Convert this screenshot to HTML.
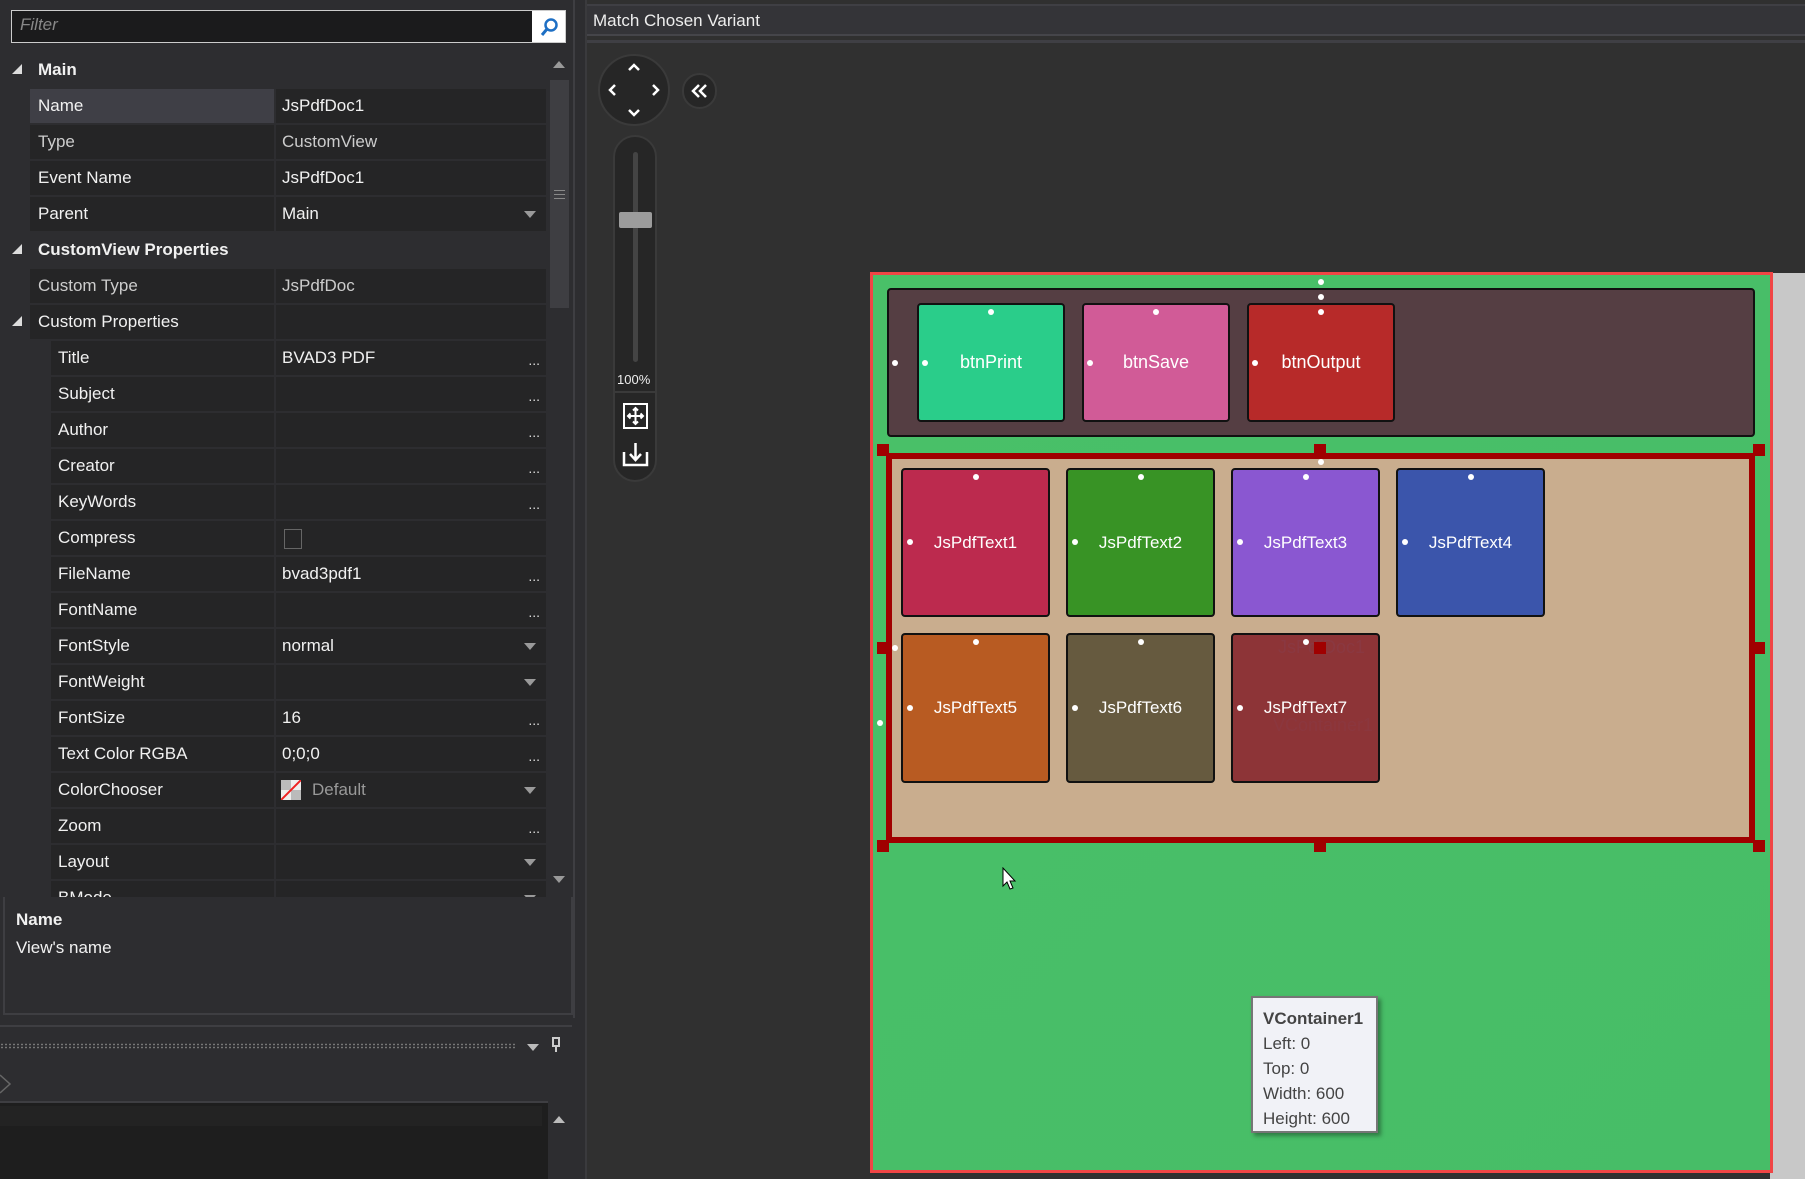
<!DOCTYPE html>
<html style="width:1805px;height:1179px;overflow:hidden"><head><meta charset="utf-8"><style>
*{margin:0;padding:0;box-sizing:border-box}
body{width:1805px;height:1179px;background:#2d2d30;font-family:"Liberation Sans",sans-serif;position:relative;overflow:hidden;color:#f1f1f1}
.a{position:absolute}
.lbl{position:absolute;background:#252526;height:34px;font-size:17px;line-height:34px;color:#f1f1f1;white-space:nowrap;overflow:hidden}
.val{position:absolute;left:276px;width:270px;background:#252526;height:34px;font-size:17px;line-height:34px;padding-left:6px;color:#f1f1f1;white-space:nowrap}
.dots{position:absolute;right:6px;top:2px;font-size:14px;color:#ddd}
.arr{position:absolute;right:10px;top:14px;width:0;height:0;border-left:6px solid transparent;border-right:6px solid transparent;border-top:7px solid #9a9a9a}
.hdr{position:absolute;left:38px;font-size:17px;font-weight:bold;line-height:34px;height:34px}
.tri{position:absolute;left:12px;width:0;height:0;border-left:10px solid transparent;border-bottom:10px solid #ddd}
.tile{position:absolute;border:2px solid #111;border-radius:4px;color:#fff;font-size:18px;text-align:center}
.dot{position:absolute;width:6px;height:6px;border-radius:3px;background:#fff}
.h{position:absolute;width:12px;height:12px;background:#a00000}
</style></head><body>
<!-- left panel -->
<div class="a" style="left:0;top:0;width:575px;height:1018px;background:#2d2d30;border-right:2px solid #3e3e42"></div>
<div class="a" style="left:11px;top:10px;width:555px;height:33px;border:1px solid #ccc;background:#1b1b1c"></div>
<div class="a" style="left:20px;top:15px;font-size:17px;font-style:italic;color:#888">Filter</div>
<div class="a" style="left:532px;top:11px;width:33px;height:31px;background:#fff"></div>
<svg class="a" style="left:538px;top:16px" width="22" height="22"><circle cx="13" cy="9" r="5.5" fill="none" stroke="#1e6fc4" stroke-width="2.5"/><line x1="9" y1="13" x2="4" y2="19" stroke="#1e6fc4" stroke-width="3"/></svg>
<div class="a" style="left:549px;top:53px;width:21px;height:844px;background:#2d2d30"></div>
<div class="a" style="left:550px;top:80px;width:19px;height:228px;background:#3e3e42"></div>
<div class="a" style="left:553px;top:61px;width:0;height:0;border-left:6px solid transparent;border-right:6px solid transparent;border-bottom:7px solid #999"></div>
<div class="a" style="left:553px;top:876px;width:0;height:0;border-left:6px solid transparent;border-right:6px solid transparent;border-top:7px solid #999"></div>
<div class="a" style="left:554px;top:190px;width:11px;height:9px;border-top:1px solid #888;border-bottom:1px solid #888"></div>
<div class="a" style="left:554px;top:194px;width:11px;height:1px;background:#888"></div>

<div class="a" style="left:0;top:53px;width:547px;height:844px;overflow:hidden">
<div class="tri" style="top:11px"></div><div class="hdr" style="top:0">Main</div>
<div class="lbl" style="left:30px;width:244px;top:36px;padding-left:8px;background:#3f3f46">Name</div><div class="val" style="top:36px">JsPdfDoc1</div>
<div class="lbl" style="left:30px;width:244px;top:72px;padding-left:8px;color:#ccc">Type</div><div class="val" style="top:72px;color:#ccc">CustomView</div>
<div class="lbl" style="left:30px;width:244px;top:108px;padding-left:8px">Event Name</div><div class="val" style="top:108px">JsPdfDoc1</div>
<div class="lbl" style="left:30px;width:244px;top:144px;padding-left:8px">Parent</div><div class="val" style="top:144px">Main<div class="arr"></div></div>
<div class="tri" style="top:191px"></div><div class="hdr" style="top:180px">CustomView Properties</div>
<div class="lbl" style="left:30px;width:244px;top:216px;padding-left:8px;color:#ccc">Custom Type</div><div class="val" style="top:216px;color:#ccc">JsPdfDoc</div>
<div class="tri" style="top:263px"></div><div class="lbl" style="left:30px;width:244px;top:252px;padding-left:8px">Custom Properties</div><div class="val" style="top:252px"></div>
<div class="lbl" style="left:51px;width:223px;top:288px;padding-left:7px">Title</div><div class="val" style="top:288px">BVAD3 PDF<span class="dots">...</span></div>
<div class="lbl" style="left:51px;width:223px;top:324px;padding-left:7px">Subject</div><div class="val" style="top:324px"><span class="dots">...</span></div>
<div class="lbl" style="left:51px;width:223px;top:360px;padding-left:7px">Author</div><div class="val" style="top:360px"><span class="dots">...</span></div>
<div class="lbl" style="left:51px;width:223px;top:396px;padding-left:7px">Creator</div><div class="val" style="top:396px"><span class="dots">...</span></div>
<div class="lbl" style="left:51px;width:223px;top:432px;padding-left:7px">KeyWords</div><div class="val" style="top:432px"><span class="dots">...</span></div>
<div class="lbl" style="left:51px;width:223px;top:468px;padding-left:7px">Compress</div><div class="val" style="top:468px"><div class="a" style="left:8px;top:8px;width:18px;height:20px;border:1px solid #666"></div></div>
<div class="lbl" style="left:51px;width:223px;top:504px;padding-left:7px">FileName</div><div class="val" style="top:504px">bvad3pdf1<span class="dots">...</span></div>
<div class="lbl" style="left:51px;width:223px;top:540px;padding-left:7px">FontName</div><div class="val" style="top:540px"><span class="dots">...</span></div>
<div class="lbl" style="left:51px;width:223px;top:576px;padding-left:7px">FontStyle</div><div class="val" style="top:576px">normal<div class="arr"></div></div>
<div class="lbl" style="left:51px;width:223px;top:612px;padding-left:7px">FontWeight</div><div class="val" style="top:612px"><div class="arr"></div></div>
<div class="lbl" style="left:51px;width:223px;top:648px;padding-left:7px">FontSize</div><div class="val" style="top:648px">16<span class="dots">...</span></div>
<div class="lbl" style="left:51px;width:223px;top:684px;padding-left:7px">Text Color RGBA</div><div class="val" style="top:684px">0;0;0<span class="dots">...</span></div>
<div class="lbl" style="left:51px;width:223px;top:720px;padding-left:7px">ColorChooser</div><div class="val" style="top:720px;padding-left:36px;color:#999">Default<svg class="a" style="left:5px;top:7px" width="20" height="20"><rect width="20" height="20" fill="#eee"/><rect width="10" height="10" fill="#bbb"/><rect x="10" y="10" width="10" height="10" fill="#bbb"/><line x1="0" y1="20" x2="20" y2="0" stroke="#e22" stroke-width="2"/></svg><div class="arr"></div></div>
<div class="lbl" style="left:51px;width:223px;top:756px;padding-left:7px">Zoom</div><div class="val" style="top:756px"><span class="dots">...</span></div>
<div class="lbl" style="left:51px;width:223px;top:792px;padding-left:7px">Layout</div><div class="val" style="top:792px"><div class="arr"></div></div>
<div class="lbl" style="left:51px;width:223px;top:828px;padding-left:7px">BMode</div><div class="val" style="top:828px"><div class="arr"></div></div>
</div>
<div class="a" style="left:3px;top:897px;width:570px;height:118px;background:#2d2d30;border:2px solid #3e3e42;border-top:none"></div>
<div class="a" style="left:16px;top:910px;font-size:17px;font-weight:bold">Name</div>
<div class="a" style="left:16px;top:938px;font-size:17px">View's name</div>
<!-- bottom left -->
<div class="a" style="left:0;top:1025px;width:572px;height:154px;background:#2d2d30;border-top:2px solid #3e3e42"></div>
<div class="a" style="left:0;top:1043px;width:515px;height:6px;background-image:radial-gradient(#777 1px,transparent 1.2px);background-size:4px 3px"></div>
<div class="a" style="left:527px;top:1044px;width:0;height:0;border-left:6px solid transparent;border-right:6px solid transparent;border-top:7px solid #bbb"></div>
<div class="a" style="left:552px;top:1037px;width:8px;height:10px;border:2px solid #ccc"></div><div class="a" style="left:555px;top:1047px;width:2px;height:5px;background:#ccc"></div>
<svg class="a" style="left:0;top:1074px" width="14" height="20"><path d="M0 1 L10 10 L0 19" fill="none" stroke="#666" stroke-width="1.5"/></svg>
<div class="a" style="left:0;top:1101px;width:552px;height:78px;background:#1e1e1e;border-top:2px solid #3e3e42"></div>
<div class="a" style="left:0;top:1106px;width:542px;height:20px;background:#232323"></div>
<div class="a" style="left:548px;top:1101px;width:22px;height:78px;background:#2d2d30"></div>
<div class="a" style="left:553px;top:1116px;width:0;height:0;border-left:6px solid transparent;border-right:6px solid transparent;border-bottom:7px solid #bbb"></div>

<!-- right area -->
<div class="a" style="left:585px;top:0;width:1220px;height:1179px;background:#303030;border-left:2px solid #3a3a3d"></div>
<div class="a" style="left:587px;top:4px;width:1218px;height:32px;background:#343438;border-top:2px solid #3f3f44;border-bottom:2px solid #45454a"></div>
<div class="a" style="left:587px;top:40px;width:1218px;height:3px;background:#3f3f44"></div>
<div class="a" style="left:593px;top:11px;font-size:17px;color:#eee">Match Chosen Variant</div>
<!-- nav -->
<div class="a" style="left:598px;top:54px;width:72px;height:72px;border-radius:36px;background:#262626;border:2px solid #3a3a3a"></div>
<svg class="a" style="left:598px;top:54px" width="72" height="72" fill="none" stroke="#fff" stroke-width="2.5"><path d="M31 16 L36 11 L41 16"/><path d="M31 56 L36 61 L41 56"/><path d="M17 31 L12 36 L17 41"/><path d="M55 31 L60 36 L55 41"/></svg>
<div class="a" style="left:682px;top:73px;width:35px;height:36px;border-radius:18px;background:#262626;border:2px solid #3a3a3a"></div>
<svg class="a" style="left:682px;top:73px" width="35" height="36" fill="none" stroke="#fff" stroke-width="2.5"><path d="M17 12 L11 18 L17 24"/><path d="M24 12 L18 18 L24 24"/></svg>
<div class="a" style="left:613px;top:135px;width:44px;height:347px;border-radius:22px;background:#262626;border:2px solid #3a3a3a"></div>
<div class="a" style="left:633px;top:152px;width:5px;height:210px;border-radius:3px;background:#444"></div>
<div class="a" style="left:619px;top:212px;width:33px;height:16px;background:#9c9c9c;border-radius:2px"></div>
<div class="a" style="left:617px;top:372px;font-size:13px;color:#eee">100%</div>
<div class="a" style="left:615px;top:391px;width:40px;height:2px;background:#3a3a3a"></div>
<svg class="a" style="left:622px;top:402px" width="28" height="66" fill="none" stroke="#fff" stroke-width="2"><rect x="2" y="2" width="23" height="24"/><path d="M13.5 6 V22 M6 14 H21 M11 8.5 L13.5 6 L16 8.5 M11 19.5 L13.5 22 L16 19.5 M8.5 11.5 L6 14 L8.5 16.5 M18.5 11.5 L21 14 L18.5 16.5"/><path d="M2 50 V63 H25 V50 M13.5 41 V58 M8 52 L13.5 58 L19 52" stroke-width="2.5"/></svg>

<!-- design -->
<div class="a" style="left:1770px;top:273px;width:35px;height:906px;background:#c8c8c8"></div>
<div class="a" style="left:870px;top:272px;width:903px;height:901px;background:linear-gradient(135deg,#49c068,#47bd67);border:3px solid #f04545"></div>
<div class="a" style="left:887px;top:288px;width:868px;height:149px;background:#553e43;border:2px solid #111;border-radius:4px"></div>
<div class="tile" style="left:917px;top:303px;width:148px;height:119px;background:#2acd8a;line-height:115px">btnPrint</div>
<div class="tile" style="left:1082px;top:303px;width:148px;height:119px;background:#d15b97;line-height:115px">btnSave</div>
<div class="tile" style="left:1247px;top:303px;width:148px;height:119px;background:#b72a29;line-height:115px">btnOutput</div>
<div class="a" style="left:886px;top:453px;width:869px;height:390px;background:#c9ad8e;border:6px solid #a00000"></div>
<div class="tile" style="left:901px;top:468px;width:149px;height:149px;background:#bc2a4e;line-height:145px;font-size:17px">JsPdfText1</div>
<div class="tile" style="left:1066px;top:468px;width:149px;height:149px;background:#389325;line-height:145px;font-size:17px">JsPdfText2</div>
<div class="tile" style="left:1231px;top:468px;width:149px;height:149px;background:#8a57d1;line-height:145px;font-size:17px">JsPdfText3</div>
<div class="tile" style="left:1396px;top:468px;width:149px;height:149px;background:#3b55ab;line-height:145px;font-size:17px">JsPdfText4</div>
<div class="tile" style="left:901px;top:633px;width:149px;height:150px;background:#b85b22;line-height:146px;font-size:17px">JsPdfText5</div>
<div class="tile" style="left:1066px;top:633px;width:149px;height:150px;background:#665a3f;line-height:146px;font-size:17px">JsPdfText6</div>
<div class="tile" style="left:1231px;top:633px;width:149px;height:150px;background:#8d3437;line-height:146px;font-size:17px">JsPdfText7</div>
<div class="a" style="left:1278px;top:637px;font-size:18px;color:#8a3a44;opacity:.8">JsPdfDoc1</div>
<div class="a" style="left:1273px;top:715px;font-size:18px;color:#8a3a44;opacity:.6">VContainer1</div>
<!-- dots -->
<div class="dot" style="left:1318px;top:279px"></div><div class="dot" style="left:1318px;top:294px"></div>
<div class="dot" style="left:892px;top:360px"></div>
<div class="dot" style="left:988px;top:309px"></div><div class="dot" style="left:922px;top:360px"></div>
<div class="dot" style="left:1153px;top:309px"></div><div class="dot" style="left:1087px;top:360px"></div>
<div class="dot" style="left:1318px;top:309px"></div><div class="dot" style="left:1252px;top:360px"></div>
<div class="dot" style="left:1318px;top:459px"></div>
<div class="dot" style="left:973px;top:474px"></div><div class="dot" style="left:907px;top:539px"></div>
<div class="dot" style="left:1138px;top:474px"></div><div class="dot" style="left:1072px;top:539px"></div>
<div class="dot" style="left:1303px;top:474px"></div><div class="dot" style="left:1237px;top:539px"></div>
<div class="dot" style="left:1468px;top:474px"></div><div class="dot" style="left:1402px;top:539px"></div>
<div class="dot" style="left:973px;top:639px"></div><div class="dot" style="left:907px;top:705px"></div>
<div class="dot" style="left:1138px;top:639px"></div><div class="dot" style="left:1072px;top:705px"></div>
<div class="dot" style="left:1303px;top:639px"></div><div class="dot" style="left:1237px;top:705px"></div>
<div class="dot" style="left:892px;top:645px"></div><div class="dot" style="left:877px;top:720px"></div>
<!-- handles -->
<div class="h" style="left:877px;top:444px"></div><div class="h" style="left:1314px;top:444px"></div><div class="h" style="left:1753px;top:444px"></div>
<div class="h" style="left:877px;top:642px"></div><div class="h" style="left:1314px;top:642px"></div><div class="h" style="left:1753px;top:642px"></div>
<div class="h" style="left:877px;top:840px"></div><div class="h" style="left:1314px;top:840px"></div><div class="h" style="left:1753px;top:840px"></div>
<!-- cursor -->
<svg class="a" style="left:1002px;top:867px" width="16" height="24"><path d="M1 1 V19 L5 15 L8 22 L11 21 L8 14 L13 14 Z" fill="#fff" stroke="#000" stroke-width="1"/></svg>
<!-- tooltip -->
<div class="a" style="left:1251px;top:996px;width:127px;height:137px;background:#f1f2f7;border:2px solid #767676;box-shadow:3px 3px 4px rgba(0,0,0,.35);padding:8px 0 0 10px;color:#444;font-size:17px;line-height:25px">
<div style="font-weight:bold">VContainer1</div><div>Left: 0</div><div>Top: 0</div><div>Width: 600</div><div>Height: 600</div></div>
</body></html>
